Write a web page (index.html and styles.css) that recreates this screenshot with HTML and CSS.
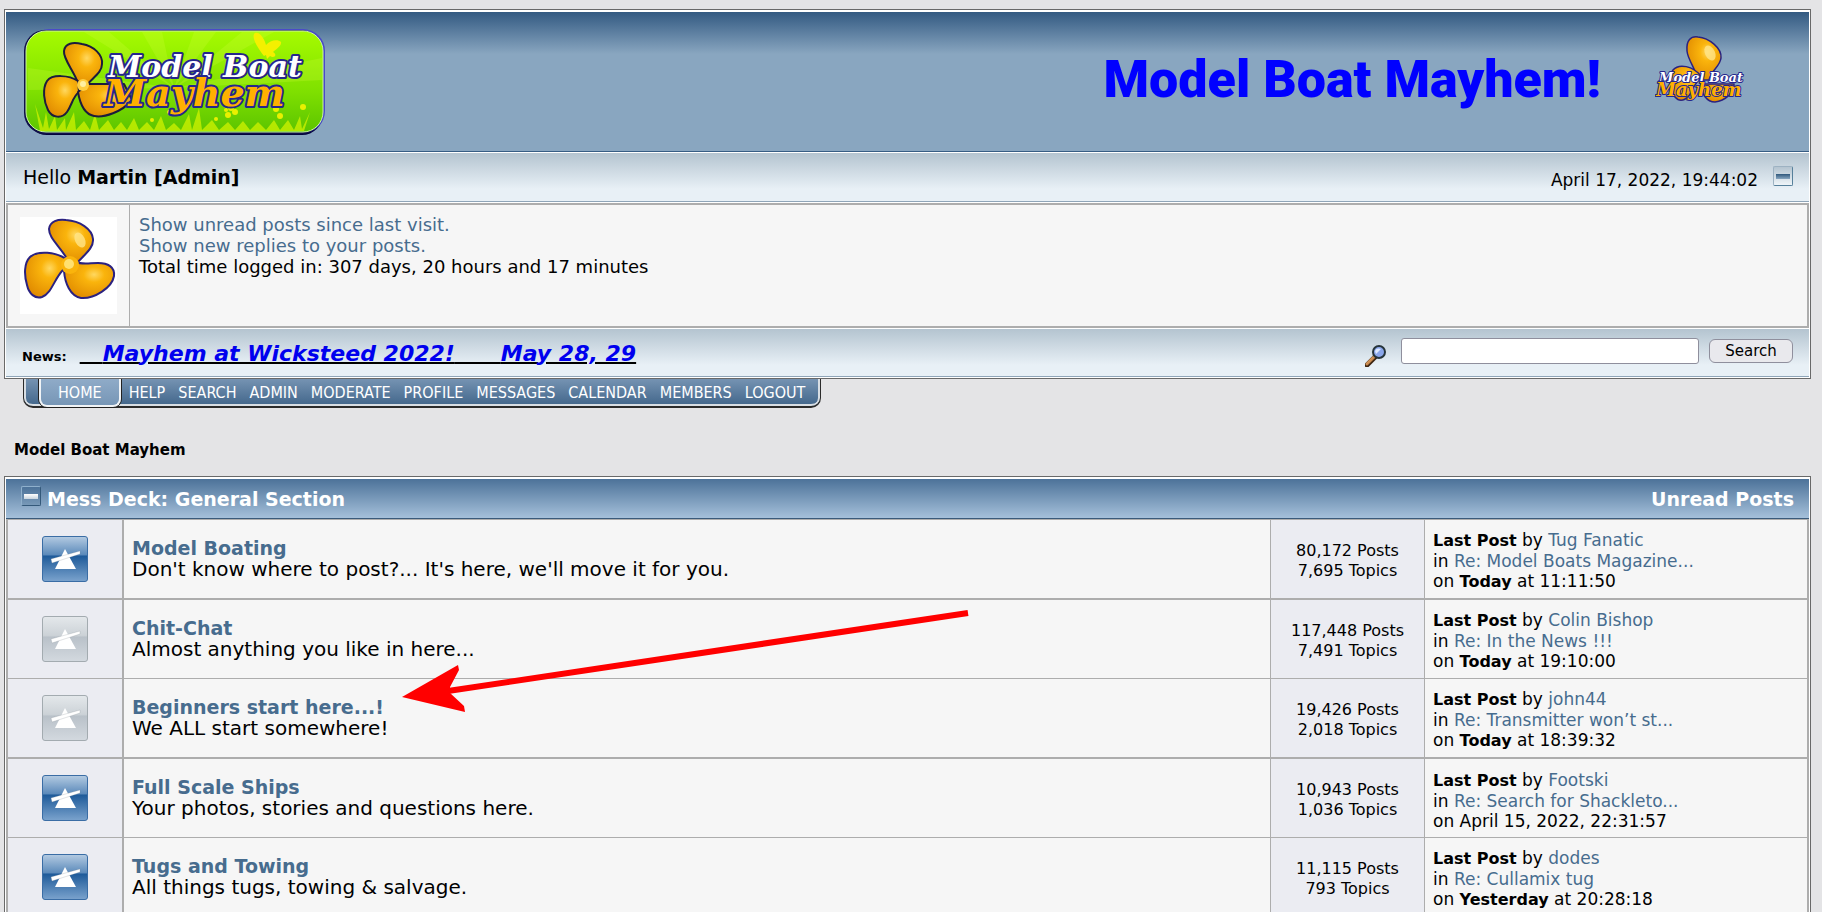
FILE: index.html
```html
<!DOCTYPE html>
<html lang="en">
<head>
  <meta charset="UTF-8">
  <meta name="viewport" content="width=device-width, initial-scale=1.0">
  <title>Model Boat Mayhem</title>
  <link rel="stylesheet" href="styles.css">
</head>
<body>
  <!-- shared shapes -->
  <svg class="defs" width="0" height="0" aria-hidden="true">
    <defs>
      <linearGradient id="lime" x1="0" y1="0" x2="0" y2="1">
        <stop offset="0" stop-color="#a6fb00"/>
        <stop offset="0.6" stop-color="#7fe000"/>
        <stop offset="1" stop-color="#5cc400"/>
      </linearGradient>
      <radialGradient id="gold" cx="0.6" cy="0.35" r="0.7">
        <stop offset="0" stop-color="#ffd860"/>
        <stop offset="0.3" stop-color="#fab40c"/>
        <stop offset="1" stop-color="#e08a00"/>
      </radialGradient>
      <linearGradient id="blueTile" x1="0" y1="0" x2="0" y2="1">
        <stop offset="0" stop-color="#b4cbe2"/>
        <stop offset="0.4" stop-color="#5d8bbb"/>
        <stop offset="0.44" stop-color="#1f5b9a"/>
        <stop offset="1" stop-color="#7ba3cd"/>
      </linearGradient>
      <linearGradient id="greyTile" x1="0" y1="0" x2="0" y2="1">
        <stop offset="0" stop-color="#e4e8eb"/>
        <stop offset="0.42" stop-color="#ccd2d7"/>
        <stop offset="0.46" stop-color="#b9c1c9"/>
        <stop offset="1" stop-color="#d3d9df"/>
      </linearGradient>
      <linearGradient id="handle" x1="0" y1="0" x2="1" y2="1">
        <stop offset="0" stop-color="#f2bb7c"/>
        <stop offset="1" stop-color="#a8622a"/>
      </linearGradient>
      <symbol id="propeller" viewBox="0 0 97 97">
        <g fill="url(#gold)" stroke="#2b2280" stroke-width="2" stroke-linejoin="round">
          <path d="M47 42C41 30 29 22 29 12C30 4 38 2 46 3C60 4 72 12 73 22C74 31 64 38 57 46Z"/>
          <path d="M46 42C36 35 18 33 10 40C4 46 4 58 7 68C9 77 15 82 22 80C32 76 34 62 43 53Z"/>
          <path d="M44 54C45 66 50 79 61 81C74 82 92 71 94 59C95 50 88 46 78 46C70 46 62 48 56 45Z"/>
        </g>
        <circle cx="50" cy="48" r="9" fill="#fab40c"/>
        <circle cx="49" cy="47" r="5" fill="#ffe070"/>
        <ellipse cx="60" cy="23" rx="5" ry="8" fill="#ffe58a" opacity="0.8" transform="rotate(-25 60 23)"/>
      </symbol>
      <symbol id="boardMark" viewBox="0 0 46 46">
        <path d="M13 33L23 13L34 33Z" fill="#fff"/>
        <path d="M9 23L38 15V18L10 27Z" fill="#fff" stroke="#808890" stroke-opacity="0.4" stroke-width="0.6"/>
      </symbol>
      <symbol id="boardOn" viewBox="0 0 46 46">
        <rect x="0.5" y="0.5" width="45" height="45" rx="2.5" fill="url(#blueTile)" stroke="#3a6da5"/>
        <use href="#boardMark"/>
      </symbol>
      <symbol id="boardOff" viewBox="0 0 46 46">
        <rect x="0.5" y="0.5" width="45" height="45" rx="2.5" fill="url(#greyTile)" stroke="#a3abb0"/>
        <use href="#boardMark"/>
      </symbol>
    </defs>
  </svg>

  <div class="frame">
    <div class="banner">
      <a href="#" aria-label="Model Boat Mayhem">
        <svg class="logo" viewBox="0 0 302 108">
          <rect x="2" y="4" width="297" height="103" rx="21" fill="#03033c"/>
          <rect x="3" y="1" width="298" height="104" rx="22" fill="#4a4ac8"/>
          <rect x="0" y="2" width="298" height="104" rx="21" fill="#10104a"/>
          <rect x="2" y="3" width="297" height="101" rx="20" fill="url(#lime)" stroke="#cdf5a0" stroke-width="1"/>
          <g fill="#d8ff40" opacity="0.22">
            <path d="M150 60L60 4H85Z"/><path d="M150 60L118 4H138Z"/>
            <path d="M150 60L170 4H192Z"/><path d="M150 60L218 4H250Z"/>
            <path d="M150 60L298 30V52Z"/><path d="M150 60L4 40V62Z"/>
          </g>
          <path d="M240 28C232 18 227 8 231 5C236 3 241 12 242 17C246 12 254 11 257 14C258 18 251 22 249 24C254 27 250 31 246 28L243 31L242 27Z" fill="#f4f000"/>
          <path d="M16 103L11 76L19 100L22 84L25 101L31 88L33 102L41 90L42 102L50 84L52 102L60 93L66 102L71 86L75 102L84 92L90 102L97 94L103 102L110 90L115 102L123 94L130 102L137 88L142 102L150 95L157 102L165 86L168 102L175 80L178 102L188 92L195 102L204 94L211 102L219 93L226 102L234 94L242 102L250 92L256 102L264 92L270 102L276 88L278 101L286 84L280 103Z" fill="#d9f500" opacity="0.7"/>
          <g fill="#e9f000">
            <circle cx="202" cy="82" r="2"/><circle cx="207" cy="80" r="3"/><circle cx="211" cy="84" r="3"/><circle cx="204" cy="87" r="3"/>
            <circle cx="256" cy="88" r="3"/><circle cx="252" cy="81" r="3"/><circle cx="192" cy="91" r="2"/><circle cx="128" cy="92" r="2"/>
            <circle cx="145" cy="84" r="2"/><circle cx="279" cy="79" r="3"/>
          </g>
          <g fill="url(#gold)" stroke="#1c1c3c" stroke-width="2" stroke-linejoin="round">
            <path d="M54 55C50 43 39 31 40 23C41 15 49 14 58 16C70 18 79 27 78 36C78 45 68 50 62 58Z"/>
            <path d="M54 53C45 47 28 46 23 53C18 61 20 74 24 82C28 90 38 91 43 84C48 77 49 68 55 64Z"/>
            <path d="M54 64C56 76 60 86 70 88C80 90 98 84 108 72L100 56H64Z"/>
          </g>
          <circle cx="59" cy="57" r="6" fill="#ffcf40"/>
          <circle cx="59" cy="56" r="3" fill="#fff0a0"/>
          <text class="logo-text logo-text-top" x="84" y="49">Model Boat</text>
          <text class="logo-text logo-text-bottom" x="80" y="78">Mayhem</text>
        </svg>
      </a>
      <div class="banner-right">
        <span class="banner-title">Model Boat Mayhem!</span>
        <svg class="mini-logo" viewBox="0 0 94 70" aria-hidden="true">
          <g fill="url(#gold)" stroke="#2b2280" stroke-width="1.5">
            <path d="M42 46C43 38 33 27 32 17C31 6 36 2 43 3C54 4 67 14 66 24C65 33 56 36 54 46Z"/>
            <path d="M46 42C38 32 24 29 18 36C13 42 14 54 20 63C26 70 34 65 38 54Z"/>
            <path d="M46 50C46 60 52 68 60 68C70 67 80 58 79 50Z"/>
          </g>
          <ellipse cx="55" cy="19" rx="5" ry="8" fill="#ffe58a" opacity="0.8" transform="rotate(-25 55 19)"/>
          <text class="logo-text mini-top" x="4" y="48">Model Boat</text>
          <text class="logo-text mini-bottom" x="1" y="62">Mayhem</text>
        </svg>
      </div>
    </div>

    <div class="bar hello-bar">
      <div class="hello">Hello <b>Martin [Admin]</b></div>
      <div class="clock">
        <span>April 17, 2022, 19:44:02</span>
        <button type="button" class="shrink light" aria-label="Shrink or expand the header"></button>
      </div>
    </div>

    <div class="user-panel">
      <div class="avatar">
        <svg viewBox="0 0 97 97" aria-hidden="true"><use href="#propeller"/></svg>
      </div>
      <div class="user-links">
        <a href="#">Show unread posts since last visit.</a><br>
        <a href="#">Show new replies to your posts.</a><br>
        Total time logged in: 307 days, 20 hours and 17 minutes
      </div>
    </div>

    <div class="bar news-bar">
      <div class="news">
        <b>News:</b>
        <u>&nbsp;&nbsp;&nbsp;<span>Mayhem at Wicksteed 2022!</span>&nbsp;&nbsp;&nbsp;&nbsp;&nbsp; <span>May 28, 29</span></u>
      </div>
      <form class="search-form">
        <svg class="magnifier" viewBox="0 0 22 22" aria-hidden="true">
          <path d="M2 20L10 12" stroke="#3c2410" stroke-width="5" stroke-linecap="round"/>
          <path d="M2 19L9 12" stroke="url(#handle)" stroke-width="3" stroke-linecap="round"/>
          <circle cx="14" cy="7" r="6" fill="#8aa6ea" stroke="#26343a" stroke-width="2"/>
          <path d="M10 6C11 3 14 3 16 4L11 9Z" fill="#dce8ff"/>
        </svg>
        <input type="text" name="search" aria-label="Search the forum">
        <button type="submit" class="search-button">Search</button>
      </form>
    </div>
  </div>

  <nav class="tabs">
    <a href="#" class="active">HOME</a>
    <a href="#">HELP</a>
    <a href="#">SEARCH</a>
    <a href="#">ADMIN</a>
    <a href="#">MODERATE</a>
    <a href="#">PROFILE</a>
    <a href="#">MESSAGES</a>
    <a href="#">CALENDAR</a>
    <a href="#">MEMBERS</a>
    <a href="#">LOGOUT</a>
  </nav>

  <div class="linktree"><a href="#">Model Boat Mayhem</a></div>

  <div class="frame category">
    <div class="cat-bar">
      <button type="button" class="shrink dark" aria-label="Collapse Mess Deck"></button>
      <a href="#">Mess Deck: General Section</a>
      <a href="#" class="unread">Unread Posts</a>
    </div>
    <table class="boards">
      <colgroup>
        <col class="col-icon"><col><col class="col-stats"><col class="col-last">
      </colgroup>
      <tbody>
        <tr>
          <td class="icon"><svg aria-label="New posts"><use href="#boardOn"/></svg></td>
          <td class="info"><a href="#">Model Boating</a><br>Don't know where to post?... It's here, we'll move it for you.</td>
          <td class="stats">80,172 Posts<br>7,695 Topics</td>
          <td class="last"><b>Last Post</b> by <a href="#">Tug Fanatic</a><br>in <a href="#">Re: Model Boats Magazine...</a><br>on <b>Today</b> at 11:11:50</td>
        </tr>
        <tr>
          <td class="icon"><svg aria-label="No new posts"><use href="#boardOff"/></svg></td>
          <td class="info"><a href="#">Chit-Chat</a><br>Almost anything you like in here...</td>
          <td class="stats">117,448 Posts<br>7,491 Topics</td>
          <td class="last"><b>Last Post</b> by <a href="#">Colin Bishop</a><br>in <a href="#">Re: In the News !!!</a><br>on <b>Today</b> at 19:10:00</td>
        </tr>
        <tr>
          <td class="icon"><svg aria-label="No new posts"><use href="#boardOff"/></svg></td>
          <td class="info"><a href="#">Beginners start here...!</a><br>We ALL start somewhere!</td>
          <td class="stats">19,426 Posts<br>2,018 Topics</td>
          <td class="last"><b>Last Post</b> by <a href="#">john44</a><br>in <a href="#">Re: Transmitter won’t st...</a><br>on <b>Today</b> at 18:39:32</td>
        </tr>
        <tr>
          <td class="icon"><svg aria-label="New posts"><use href="#boardOn"/></svg></td>
          <td class="info"><a href="#">Full Scale Ships</a><br>Your photos, stories and questions here.</td>
          <td class="stats">10,943 Posts<br>1,036 Topics</td>
          <td class="last"><b>Last Post</b> by <a href="#">Footski</a><br>in <a href="#">Re: Search for Shackleto...</a><br>on April 15, 2022, 22:31:57</td>
        </tr>
        <tr>
          <td class="icon"><svg aria-label="New posts"><use href="#boardOn"/></svg></td>
          <td class="info"><a href="#">Tugs and Towing</a><br>All things tugs, towing &amp; salvage.</td>
          <td class="stats">11,115 Posts<br>793 Topics</td>
          <td class="last"><b>Last Post</b> by <a href="#">dodes</a><br>in <a href="#">Re: Cullamix tug</a><br>on <b>Yesterday</b> at 20:28:18</td>
        </tr>
      </tbody>
    </table>
    <!-- points at the beginners board -->
    <svg class="arrow" viewBox="0 0 568 106" aria-hidden="true">
      <path d="M46 82L566 4" stroke="#f00" stroke-width="6"/>
      <path d="M0 88L56 56L57 61L48 78V84L62 97L63 103Z" fill="#f00"/>
    </svg>
  </div>
</body>
</html>
```
FILE: styles.css
```css
body {
  margin: 0;
  padding: 9px 11px 0 4px;
  background-color: #e4e4e6;
  color: #000;
  font-family: Verdana, "DejaVu Sans", sans-serif;
  font-size: 17px;
  line-height: 20px;
}
a {
  color: #476c8e;
  text-decoration: none;
}
a:hover {
  text-decoration: underline;
}
.defs {
  position: absolute;
}

.frame {
  border: 1px solid #696969;
  background-color: #fff;
  padding: 2px 1px 1px;
}

/* banner */
.banner {
  display: flex;
  justify-content: space-between;
  height: 139px;
  padding: 0 60px 0 18px;
  border-bottom: 1px solid #375d84;
  margin-bottom: 1px;
  background: linear-gradient(#335a82, #89a6c0 42px);
}
.logo {
  display: block;
  width: 302px;
  height: 108px;
  margin-top: 16px;
}
.logo-text {
  font-family: "DejaVu Serif", serif;
  font-weight: bold;
  font-style: italic;
  stroke: #26268c;
  stroke-width: 4px;
  stroke-linejoin: round;
  paint-order: stroke;
}
.logo-text-top {
  font-size: 30px;
  fill: #fff;
}
.logo-text-bottom {
  font-size: 38px;
  fill: #ffb000;
}
.mini-top {
  font-size: 13px;
  fill: #fff;
  stroke-width: 2px;
}
.mini-bottom {
  font-size: 18px;
  fill: #ffb000;
  stroke-width: 2px;
}
.banner-right {
  display: flex;
  align-items: flex-start;
  gap: 54px;
  padding-top: 22px;
}
.banner-title {
  padding-top: 14px;
  font-family: Impact, Roboto, sans-serif;
  font-size: 52px;
  font-weight: 900;
  line-height: 64px;
  color: #00f;
  white-space: pre;
}
.mini-logo {
  width: 94px;
  height: 70px;
}

/* light bars */
.bar {
  display: flex;
  justify-content: space-between;
  align-items: center;
  height: 48px;
  padding: 0 16px 0 17px;
  border-bottom: 1px solid #8fa5b8;
  background: linear-gradient(#b4c4d0, #e8f0f6 36px);
}
.news-bar {
  height: 47px;
}
.hello {
  font-size: 19px;
}
.clock {
  display: flex;
  gap: 15px;
  padding-top: 6px;
}
.shrink {
  width: 20px;
  height: 20px;
  padding: 0;
  border: 1px solid;
  border-radius: 2px;
}
.shrink::before {
  content: "";
  display: block;
  height: 5px;
  margin: 0 2px;
}
.shrink.light {
  margin-top: -4px;
  border-color: #9db2c2 #56809b #56809b #9db2c2;
  background: linear-gradient(#b4c4d0, #eef4f8);
}
.shrink.light::before {
  background: linear-gradient(#2f587c, #88a6c0);
}
.shrink.dark {
  border-color: #8fb0cc #34597a #34597a #8fb0cc;
  background: linear-gradient(#4c7299, #7899b8);
}
.shrink.dark::before {
  background: linear-gradient(#fff, #c8d4de);
}

.user-panel {
  display: flex;
  margin: 1px 0;
  border: 2px solid #adadad;
  background-color: #f6f6f6;
}
.avatar {
  padding: 12px;
  border-right: 1px solid #adadad;
}
.avatar svg {
  display: block;
  width: 97px;
  height: 97px;
  background-color: #fff;
}
.user-links {
  padding: 9px;
  font-size: 18px;
  line-height: 21px;
}

.news {
  display: flex;
  align-items: baseline;
  gap: 13px;
  padding-top: 2px;
}
.news b {
  font-size: 13px;
  margin-left: -1px;
}
.news u {
  font-size: 22px;
  font-weight: bold;
  font-style: italic;
  line-height: 26px;
  text-decoration-thickness: 2px;
}
.news span {
  color: #00e;
}
.search-form {
  display: flex;
  align-items: center;
  gap: 10px;
  padding-bottom: 4px;
}
.magnifier {
  width: 22px;
  height: 22px;
  margin: 10px 4px 0 0;
}
.search-form input {
  box-sizing: border-box;
  width: 298px;
  height: 26px;
  border: 1px solid #8f8f9d;
  border-radius: 3px;
  background-color: #fff;
  font: inherit;
}
.search-button {
  width: 84px;
  height: 24px;
  padding: 0;
  border: 1px solid #8f8f9d;
  border-radius: 6px;
  background-color: #e9e9ed;
  font-family: inherit;
  font-size: 15px;
}

/* menu */
.tabs {
  display: flex;
  width: fit-content;
  box-sizing: border-box;
  height: 29px;
  margin-left: 19px;
  padding: 0 15px;
  gap: 13px;
  border: solid #2b2b2b;
  border-width: 0 1px 2px;
  border-radius: 0 0 10px 10px;
  box-shadow: inset 0 -2px #d8dee4, inset 2px 0 #d8dee4, inset -2px 0 #d8dee4;
  background: linear-gradient(#7593b2, #41658a);
}
.tabs a {
  color: #fff;
  font-family: Tahoma, "DejaVu Sans Condensed", "Noto Sans", sans-serif;
  font-size: 16px;
  line-height: 28px;
}
.tabs .active {
  height: 26px;
  padding: 0 17px;
  margin-right: -5px;
  border: solid #f0f3f6;
  border-width: 0 2px 2px;
  border-radius: 0 0 8px 8px;
  box-shadow: 0 1px #222, 1px 0 #222, -1px 0 #222;
  background: linear-gradient(#8fabc8, #7796b6);
}

.linktree {
  padding: 32px 10px 16px;
  font-size: 15px;
  font-weight: bold;
}
.linktree a {
  color: #000;
}

/* board list */
.category {
  position: relative;
}
.cat-bar {
  display: flex;
  align-items: center;
  gap: 6px;
  height: 39px;
  padding: 0 15px;
  border-bottom: 1px solid #3a5a7a;
  background: linear-gradient(#4c7299, #a5c0da);
  font-size: 19px;
  font-weight: bold;
}
.cat-bar a {
  color: #fff;
}
.cat-bar .dark {
  margin-top: -5px;
}
.cat-bar .unread {
  margin-left: auto;
}
.boards {
  width: 100%;
  table-layout: fixed;
  border: 2px solid #adadad;
  border-top-width: 1px;
  border-spacing: 0;
}
.col-icon {
  width: 116px;
}
.col-stats {
  width: 154px;
}
.col-last {
  width: 382px;
}
.boards td {
  height: 78px;
  padding: 0 8px;
  background-color: #f6f6f6;
  border: solid #adadad;
  border-width: 0 1px 1px 0;
}
.boards tr:nth-child(odd) td {
  border-bottom-width: 2px;
}
.boards .icon {
  padding: 0;
  border-right-width: 2px;
  background-color: #ebecf2;
  text-align: center;
}
.icon svg {
  display: block;
  width: 46px;
  height: 46px;
  margin: 0 auto;
}
.boards .info {
  box-sizing: border-box;
  font-size: 20px;
  line-height: 21px;
}
.info a {
  font-size: 19px;
  font-weight: bold;
}
.boards .stats {
  padding-top: 4px;
  height: 74px;
  font-size: 16px;
  background-color: #ebecf2;
  text-align: center;
}
.boards .last {
  padding-top: 4px;
  height: 74px;
  border-right-width: 0;
}
.last b {
  font-size: 16px;
}

.arrow {
  position: absolute;
  left: 397px;
  top: 132px;
  width: 568px;
  height: 106px;
  pointer-events: none;
}
```
